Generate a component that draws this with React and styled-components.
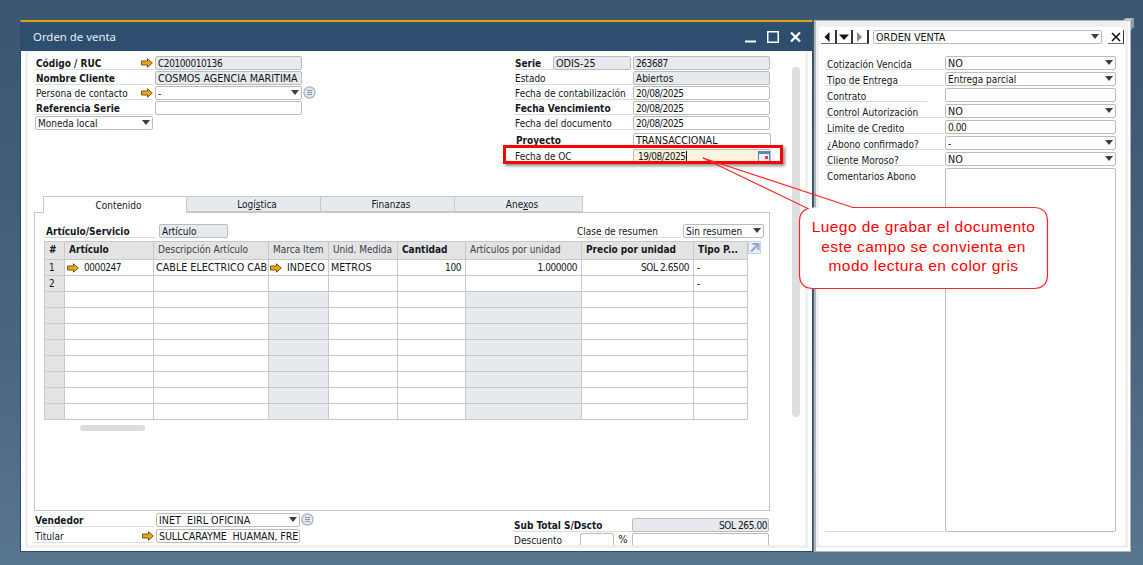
import React from "react";
import styled, { createGlobalStyle } from "styled-components";

const Global = createGlobalStyle`
  html, body { margin: 0; padding: 0; width: 1143px; height: 565px; overflow: hidden; }
  * { box-sizing: border-box; }
  body { font-family: "DejaVu Sans Condensed", "Noto Sans", sans-serif; font-size: 10px; color: #14181e; }
`;

const capsOrNum = p =>
  p.$num ? "font-size: 10px; letter-spacing: -.42px;" : p.$caps ? `font-size: 10.7px; letter-spacing: ${p.$tight ? "-.15px" : "0"};` : "font-size: 10px;";

const Desktop = styled.div`
  position: relative; width: 1143px; height: 565px; overflow: hidden;
  display: flex; gap: 1px; padding: 20px 0 0 20px;
  background: linear-gradient(180deg, #3a5670 0%, #456079 45%, #58758f 100%);
`;
const MainWindow = styled.section`
  width: 793px; height: 532px; display: flex; flex-direction: column;
  background: #fff; border: 1px solid #2c4d6e; border-top: 2px solid #e3a00f;
`;
const TitleBar = styled.header`
  height: 29px; flex: none; margin: 0 -1px; padding: 0 12px 0 13px; background: #2d4e6f;
  display: flex; align-items: center; justify-content: space-between;
  color: #e6edf3; font-family: "Noto Sans", sans-serif; font-size: 11.4px;
`;
const Controls = styled.div` display: flex; gap: 11px; align-items: center; `;
const MainOuter = styled.div` flex: 1; min-height: 0; padding: 0 4px 3px; display: flex; `;
const MainBand = styled.div`
  flex: 1; min-width: 0; border: 3px solid #f0f0f0; border-top: 0; display: flex;
`;
const MainBody = styled.div`
  position: relative; flex: 1; min-width: 0; overflow: hidden; padding: 5px 35px 0 6px; background: #fff;
`;
const VScroll = styled.div`
  position: absolute; left: 764px; top: 16px; width: 8px; height: 350px; border-radius: 4px; background: #dedede;
`;
const TopForm = styled.div` height: 140px; display: flex; justify-content: space-between; padding-left: 1px; `;
const Col = styled.div` display: flex; flex-direction: column; gap: 1px; width: ${p => p.$w}px; `;
const Row = styled.div`
  position: relative; display: flex; height: 14px; align-items: stretch;
  margin-top: ${p => p.$mt || 0}px;
`;
const Label = styled.div`
  width: ${p => p.$w}px; flex: none; display: flex; align-items: center; justify-content: space-between;
  border-bottom: 1px solid #dcdcdc; padding: 1px 0 0 ${p => p.$pad ?? 1}px; white-space: nowrap;
  font-weight: ${p => (p.$bold ? 700 : 400)}; margin-right: ${p => p.$mr || 0}px; color: #14181e;
`;
const Field = styled.div`
  width: ${p => (p.$w ? p.$w + "px" : "auto")}; flex: ${p => (p.$w ? "none" : "1")};
  height: ${p => p.$h || 14}px; ${capsOrNum}
  border: 1px solid #bcbcbc; border-radius: 2px; padding: 1px 1px 0 2px;
  background: ${p => (p.$ro ? "#e6eaee" : p.$focus ? "#fdf3de" : "#fff")};
  display: flex; align-items: center; justify-content: ${p => (p.$right ? "flex-end" : "space-between")};
  white-space: pre; overflow: hidden; color: #101418; line-height: 12px;
`;
const Caret = styled.i`
  flex: none; width: 0; height: 0; margin: 0 1px 2px 0;
  border-left: 4px solid transparent; border-right: 4px solid transparent; border-top: 5px solid #3c3c3c;
`;
const DateText = styled.span` padding-left: 2px; border-right: 1px solid #111; `;
const Highlight = styled.div`
  position: absolute; left: -12px; top: -4px; width: 280px; height: 19px; pointer-events: none;
  border: 3px solid #f00; box-shadow: 2px 2px 3px rgba(0,0,0,.45);
`;
const Tabs = styled.div` display: flex; padding-left: 9px; height: 17px; position: relative; z-index: 1; `;
const Tab = styled.div`
  width: ${p => p.$w}px; height: ${p => (p.$on ? 17 : 16)}px; display: flex; align-items: center; justify-content: center;
  padding-left: 7px;
  border: 1px solid #c8c8c8; border-left: ${p => (p.$on ? "1px solid #c8c8c8" : "0")}; border-bottom: ${p => (p.$on ? "0" : "1px solid #c8c8c8")};
  background: ${p => (p.$on ? "#fff" : "#e6eaee")}; color: #14181e;
`;
const Panel = styled.div`
  height: 299px; margin-top: -1px; border: 1px solid #c8c8c8; padding: 11px 5px 0 9px;
  position: relative;
`;
const SubRow = styled.div` display: flex; height: 14px; margin-bottom: 3px; `;
const Spacer = styled.div` flex: 1; `;
const GridWrap = styled.div` position: relative; width: 703px; `;
const Grid = styled.table`
  border-collapse: collapse; table-layout: fixed; width: 703px; font-size: 10px;
  th, td { border: 1px solid #c8c8c8; padding: 0; overflow: hidden; white-space: nowrap; }
`;
const Th = styled.th`
  height: 18px; background: #e3e3e3; text-align: left; font-weight: ${p => (p.$bold ? 700 : 400)};
  color: ${p => (p.$bold ? "#14181e" : "#3a4048")}; && { padding-left: 4px; padding-bottom: 3px; }
`;
const Td = styled.td`
  height: 16px; text-align: ${p => (p.$right ? "right" : "left")}; line-height: 14px;
  ${capsOrNum}
  background: ${p => (p.$grey ? "#e6eaee" : p.$head ? "#e3e3e3" : "#fff")};
  && { padding: 0 ${p => (p.$right ? 4 : 0)}px 0 ${p => p.$pl ?? 2}px; }
`;
const LinkCell = styled.span` display: flex; align-items: center; gap: 5px; `;
const Expand = styled.svg` position: absolute; left: 704px; top: 0; `;
const HThumb = styled.div` width: 65px; height: 6px; margin: 5px 0 0 36px; border-radius: 3px; background: #dcdcdc; `;
const Footer = styled.div` display: flex; justify-content: space-between; padding-top: 2px; `;
const FootRight = styled.div` width: 258px; padding-top: 5px; display: flex; flex-direction: column; gap: 1px; `;
const Percent = styled.span` width: 18px; flex: none; text-align: center; font-size: 11px; `;

const SideWindow = styled.aside`
  width: 317px; height: 532px; background: #fff; display: flex;
  border: 1px solid #b4b4b4; border-left-width: 2px; padding: 0 2px 3px 0; position: relative;
`;
const SideBand = styled.div`
  flex: 1; min-width: 0; border: 3px solid #f0f0f0; border-top-width: 6px; padding: 3px 0 0 2px;
`;
const Toolbar = styled.div` display: flex; height: 14px; `;
const NavGroup = styled.div` display: flex; width: 48px; margin-right: 4px; `;
const NavBtn = styled.div`
  flex: 1; height: 14px; display: flex; align-items: center; justify-content: center;
  border-right: 2px solid #333; border-bottom: 1px solid #6a6a6a;
`;
const CloseBtn = styled(NavBtn)` flex: none; width: 16px; margin-left: 6px; border-right-width: 1px; `;
const SideForm = styled.div` margin: 12px 0 0 4px; display: flex; flex-direction: column; gap: 2px; `;
const SideLabel = styled(Label)`
  padding: 3px 0 0 2px; line-height: 11px; width: ${p => p.$w || 120}px; margin-right: ${p => p.$mr || 0}px;
`;
const SideRow = styled.div` display: flex; height: ${p => p.$h || 14}px; `;
const TopLabel = styled.div`
  width: 120px; flex: none; padding: 3px 0 0 2px; border-bottom: 1px solid #dcdcdc;
`;
const Grip = styled.svg` position: absolute; right: -4px; top: -3px; `;

const Callout = styled.div`
  position: absolute; left: 799px; top: 207px; width: 249px; height: 82px;
  display: flex; flex-direction: column; align-items: center; padding-top: 10px;
  color: #f00; font-family: "Liberation Sans", Arial, sans-serif; font-size: 15.5px; line-height: 19.5px; letter-spacing: .45px;
`;
const CalloutArt = styled.svg` position: absolute; left: 0; top: 0; pointer-events: none; `;

const Arrow = () => (
  <svg width="12" height="10" viewBox="0 0 12 10" style={{ flex: "none" }}>
    <path d="M.5 3H6.5V.8L11.3 5 6.5 9.2V7H.5Z" fill="#f0a515" stroke="#6f5a1e" strokeWidth="1" />
  </svg>
);
const Lines = () => (
  <svg width="13" height="13" viewBox="0 0 13 13" style={{ marginLeft: 1, flex: "none" }}>
    <circle cx="6.5" cy="6.5" r="5.6" fill="#e6e9f0" stroke="#a8b2c4" strokeWidth="1.3" />
    <path d="M4 4.5H9M4 6.5H9M4 8.5H9" stroke="#8a94a8" strokeWidth="1" />
  </svg>
);
const DateIcon = () => (
  <svg width="12" height="12" viewBox="0 0 12 12" style={{ flex: "none", marginRight: -1 }}>
    <rect x=".5" y=".5" width="11" height="11" fill="#eef2f8" stroke="#5c86b6" />
    <rect x="0" y="0" width="12" height="3" fill="#5c86b6" />
    <rect x="7" y="5" width="3" height="3" fill="#e8364a" />
  </svg>
);
const Tri = ({ d, c = "#111" }) => {
  const paths = { l: "M7.5 1V11L2.5 6Z", r: "M3 1V11L8 6Z", d: "M1 3.5H11L6 9Z" };
  return (
    <svg width="12" height="12" viewBox="0 0 12 12">
      <path d={paths[d]} fill={c} />
    </svg>
  );
};

const colW = [20, 89, 115, 60, 69, 68, 116, 112, 54];
const headers = [
  ["#", true], ["Artículo", true], ["Descripción Artículo", false], ["Marca Item", false],
  ["Unid. Medida", false], ["Cantidad", true], ["Artículos por unidad", false], ["Precio por unidad", true], ["Tipo P...", true],
];
const blankRows = [3, 4, 5, 6, 7, 8, 9, 10];

const sideFields = [
  { l: "Cotización Vencida", v: "NO", sel: true, caps: true },
  { l: "Tipo de Entrega", v: "Entrega parcial", sel: true },
  { l: "Contrato", v: "", w: 102 },
  { l: "Control Autorización", v: "NO", sel: true, caps: true },
  { l: "Limite de Credito", v: "0.00", num: true },
  { l: "¿Abono confirmado?", v: "-", sel: true },
  { l: "Cliente Moroso?", v: "NO", sel: true, caps: true },
];

export default function App() {
  return (
    <Desktop>
      <Global />
      <MainWindow>
        <TitleBar>
          <span>Orden de venta</span>
          <Controls>
            <svg width="11" height="12" viewBox="0 0 11 12"><path d="M0 10.5H11" stroke="#fff" strokeWidth="2" /></svg>
            <svg width="12" height="12" viewBox="0 0 12 12"><rect x=".75" y=".75" width="10.5" height="10.5" fill="none" stroke="#fff" strokeWidth="1.5" /></svg>
            <svg width="11" height="12" viewBox="0 0 11 12"><path d="M1 1.5L10 10.5M10 1.5L1 10.5" stroke="#fff" strokeWidth="2.2" /></svg>
          </Controls>
        </TitleBar>
        <MainOuter>
          <MainBand>
            <MainBody>
              <VScroll />
              <TopForm>
                <Col $w={282}>
                  <Row><Label $w={118} $mr={2} $bold>Código / RUC<Arrow /></Label><Field $w={147} $ro $num>C20100010136</Field></Row>
                  <Row><Label $w={118} $mr={2} $bold>Nombre Cliente</Label><Field $w={147} $ro $caps>COSMOS AGENCIA MARITIMA</Field></Row>
                  <Row><Label $w={118} $mr={2}>Persona de contacto<Arrow /></Label><Field $w={147}>-<Caret /></Field><Lines /></Row>
                  <Row><Label $w={118} $mr={2} $bold>Referencia Serie</Label><Field $w={147} /></Row>
                  <Row><Field $w={118}>Moneda local<Caret /></Field></Row>
                </Col>
                <Col $w={255}>
                  <Row>
                    <Label $w={38} $bold $pad={0}>Serie</Label>
                    <Field $w={78} $ro $caps>ODIS-25</Field>
                    <Field $w={137} $ro $num style={{ marginLeft: 2 }}>263687</Field>
                  </Row>
                  <Row><Label $w={118} $pad={0}>Estado</Label><Field $w={137} $ro>Abiertos</Field></Row>
                  <Row><Label $w={118} $pad={0}>Fecha de contabilización</Label><Field $w={137} $num>20/08/2025</Field></Row>
                  <Row><Label $w={118} $bold $pad={0}>Fecha Vencimiento</Label><Field $w={137} $num>20/08/2025</Field></Row>
                  <Row><Label $w={118} $pad={0}>Fecha del documento</Label><Field $w={137} $num>20/08/2025</Field></Row>
                  <Row $mt={2}><Label $w={118} $bold $pad={1}>Proyecto</Label><Field $w={138} $caps>TRANSACCIONAL</Field></Row>
                  <Row $mt={1}>
                    <Label $w={118} $pad={0}>Fecha de OC</Label>
                    <Field $w={138} $focus $num>
                      <DateText>19/08/2025</DateText>
                      <DateIcon />
                    </Field>
                    <Highlight />
                  </Row>
                </Col>
              </TopForm>
              <Tabs>
                <Tab $w={144} $on>Contenido</Tab>
                <Tab $w={134}><span>Logí<u>s</u>tica</span></Tab>
                <Tab $w={134}>Finanzas</Tab>
                <Tab $w={128}><span>Ane<u>x</u>os</span></Tab>
              </Tabs>
              <Panel>
                <SubRow>
                  <Label $w={112} $bold $pad={2} $mr={3}>Artículo/Servicio</Label>
                  <Field $w={69} $ro>Artículo</Field>
                  <Spacer />
                  <Label $w={104} $pad={0} $mr={2}>Clase de resumen</Label>
                  <Field $w={81}>Sin resumen<Caret /></Field>
                </SubRow>
                <GridWrap>
                  <Grid>
                    <colgroup>{colW.map((w, i) => <col key={i} style={{ width: w }} />)}</colgroup>
                    <thead>
                      <tr>{headers.map(([t, b]) => <Th key={t} $bold={b}>{t}</Th>)}</tr>
                    </thead>
                    <tbody>
                      <tr>
                        <Td $head $pl={4}>1</Td>
                        <Td $num><LinkCell><Arrow />0000247</LinkCell></Td>
                        <Td $caps>CABLE ELECTRICO CAB</Td>
                        <Td $pl={1} $caps><LinkCell><Arrow />INDECO</LinkCell></Td>
                        <Td $caps>METROS</Td>
                        <Td $right $num>100</Td>
                        <Td $right $num>1.000000</Td>
                        <Td $right $num>SOL 2.6500</Td>
                        <Td $pl={3}>-</Td>
                      </tr>
                      <tr>
                        <Td $head $pl={4}>2</Td><Td /><Td /><Td /><Td /><Td /><Td /><Td /><Td $pl={3}>-</Td>
                      </tr>
                      {blankRows.map(r => (
                        <tr key={r}>
                          <Td $head /><Td /><Td /><Td $grey /><Td /><Td /><Td $grey /><Td /><Td />
                        </tr>
                      ))}
                    </tbody>
                  </Grid>
                  <Expand width="13" height="13" viewBox="0 0 13 13">
                    <rect x=".5" y=".5" width="12" height="12" fill="#e8eef6" stroke="#c6d4e6" />
                    <path d="M3 10.5L10 3.5M4.5 3H10.5V9" fill="none" stroke="#8fa9cc" strokeWidth="2" />
                  </Expand>
                  <HThumb />
                </GridWrap>
              </Panel>
              <Footer>
                <Col $w={282} style={{ gap: 2 }}>
                  <Row><Label $w={120} $mr={2} $bold>Vendedor</Label><Field $w={144} $caps>INET  EIRL OFICINA<Caret /></Field><Lines /></Row>
                  <Row><Label $w={120} $mr={2}>Titular<Arrow /></Label><Field $w={144} $caps $tight>SULLCARAYME  HUAMAN, FRE</Field></Row>
                </Col>
                <FootRight>
                  <Row><Label $w={120} $bold $pad={2}>Sub Total S/Dscto</Label><Field $w={137} $ro $right $num>SOL 265.00</Field></Row>
                  <Row>
                    <Label $w={68} $pad={2}>Descuento</Label>
                    <Field $w={34} />
                    <Percent>%</Percent>
                    <Field $w={137} />
                  </Row>
                </FootRight>
              </Footer>
            </MainBody>
          </MainBand>
        </MainOuter>
      </MainWindow>

      <SideWindow>
        <Grip width="12" height="14" viewBox="0 0 12 14">
          <path d="M1 2H9V12M3 .8H11V10" fill="none" stroke="#c4ccd4" strokeWidth="1.2" />
        </Grip>
        <SideBand>
          <Toolbar>
            <NavGroup>
              <NavBtn><Tri d="l" /></NavBtn>
              <NavBtn><Tri d="d" /></NavBtn>
              <NavBtn><Tri d="r" c="#8a8a8a" /></NavBtn>
            </NavGroup>
            <Field $w={229} $caps>ORDEN VENTA<Caret /></Field>
            <CloseBtn>
              <svg width="12" height="12" viewBox="0 0 12 12"><path d="M2 2L10 10M10 2L2 10" stroke="#111" strokeWidth="1.6" /></svg>
            </CloseBtn>
          </Toolbar>
          <SideForm>
            {sideFields.map(f => (
              <SideRow key={f.l}>
                <SideLabel $w={f.w || 120} $mr={f.w ? 120 - f.w : 0}>{f.l}</SideLabel>
                <Field $w={171} $caps={f.caps} $num={f.num}>{f.v}{f.sel && <Caret />}</Field>
              </SideRow>
            ))}
            <SideRow $h={364}>
              <TopLabel>Comentarios Abono</TopLabel>
              <Field $w={171} $h={364} />
            </SideRow>
          </SideForm>
        </SideBand>
      </SideWindow>

      <CalloutArt width="1143" height="565" viewBox="0 0 1143 565">
        <rect x="799.5" y="207.5" width="248" height="81" rx="14" fill="#fff" />
        <path d="M853 207.5H1033.5Q1047.5 207.5 1047.5 221.5V274.5Q1047.5 288.5 1033.5 288.5H813.5Q799.5 288.5 799.5 274.5V221.5Q799.5 211 808 208.5L703 158Z" fill="none" stroke="#f22" strokeWidth="1.2" />
      </CalloutArt>
      <Callout>
        <span>Luego de grabar el documento</span>
        <span>este campo se convienta en</span>
        <span>modo lectura en color gris</span>
      </Callout>
    </Desktop>
  );
}
